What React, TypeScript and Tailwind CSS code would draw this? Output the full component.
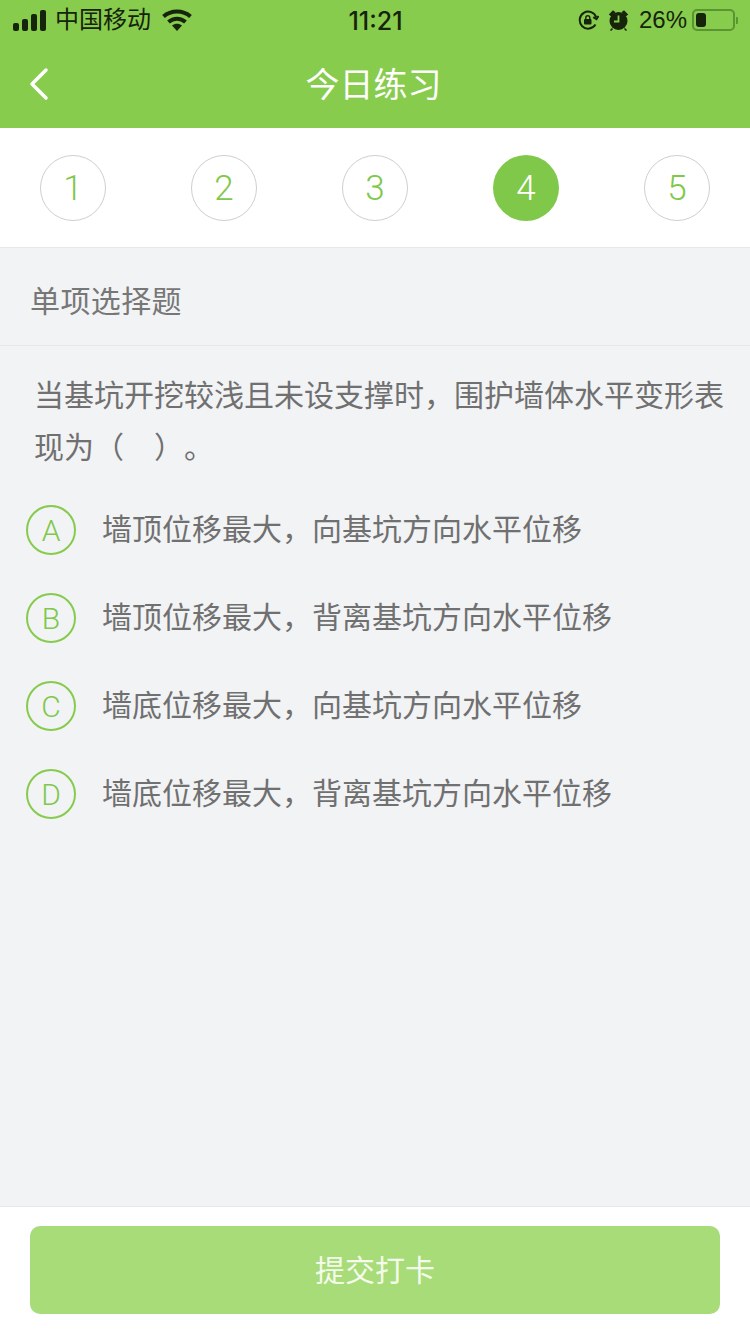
const cjk = "font-['Liberation_Sans','Noto_Sans_CJK_SC',sans-serif]";
const digits = "font-['Roboto','Noto_Sans_CJK_SC',sans-serif] font-light";

const steps = [1, 2, 3, 4, 5];

const options = [
  { key: "A", text: "墙顶位移最大，向基坑方向水平位移" },
  { key: "B", text: "墙顶位移最大，背离基坑方向水平位移" },
  { key: "C", text: "墙底位移最大，向基坑方向水平位移" },
  { key: "D", text: "墙底位移最大，背离基坑方向水平位移" },
];

function StatusBar() {
  return (
    <div className="h-10 flex items-center pl-[13px] pr-[12px] text-[#16240c]">
      <div className="flex-1 flex items-center">
        <div className="flex items-end gap-[3px] h-[22px]">
          <span className="w-[6px] h-[8px] rounded-[2px] bg-[#16240c]" />
          <span className="w-[6px] h-[12px] rounded-[2px] bg-[#16240c]" />
          <span className="w-[6px] h-[17px] rounded-[2px] bg-[#16240c]" />
          <span className="w-[6px] h-[21px] rounded-[2px] bg-[#16240c]" />
        </div>
        <span className="ml-[9px] text-[24px] leading-none">中国移动</span>
        <svg className="ml-[11px]" width="30" height="22" viewBox="0 0 30 22" fill="none" stroke="#16240c" strokeWidth="4">
          <path d="M1.500 7.500C9 .8 21 .8 28.500 7.500" />
          <path d="M6.500 13C11.500 8.500 18.500 8.500 23.500 13" />
          <path d="M15 22l-5-5.500c3-2.200 7-2.200 10 0z" fill="#16240c" stroke="none" />
        </svg>
      </div>
      <span className="text-[25px] font-['Inter'] font-medium leading-none mt-[2px]">11:21</span>
      <div className="flex-1 flex items-center justify-end">
        <svg width="22" height="20" viewBox="0 0 22 20" fill="none" stroke="#16240c" strokeWidth="2">
          <path d="M18.500 14.500a8.500 8.500 0 1 1 .8-7" />
          <path d="M21.500 6l-2 3.200-3.200-2" />
          <rect x="7" y="9" width="7.500" height="5.500" rx="1" fill="#16240c" stroke="none" />
          <path d="M8.800 9.500V7.800a2 2 0 0 1 4 0V9.500" strokeWidth="1.400" />
        </svg>
        <svg className="ml-[9px]" width="21" height="22" viewBox="0 0 21 22" fill="#16240c">
          <circle cx="10.500" cy="12" r="9" />
          <path d="M.8 5.500L5 1.200l2.500 2-4.300 4.300zM20.200 5.500L16 1.200l-2.500 2 4.300 4.300z" />
          <path d="M4.500 19.500l-2 2M16.500 19.500l2 2" stroke="#16240c" strokeWidth="1.500" />
          <path d="M10.500 6.500v6H6" stroke="#88cc4e" strokeWidth="1.800" fill="none" />
        </svg>
        <span className="ml-[10px] text-[24px] leading-none">26%</span>
        <div className="ml-[5px] flex items-center">
          <div className="w-[43px] h-[22px] rounded-[5px] border-2 border-[#5a9433] p-[2px]">
            <div className="w-[10px] h-full rounded-[3px] bg-[#16240c]" />
          </div>
          <span className="ml-[1px] w-[2px] h-[7px] bg-[#5a9433] rounded-r-[1px]" />
        </div>
      </div>
    </div>
  );
}

export default function App() {
  return (
    <div className={`w-[750px] h-[1334px] flex flex-col bg-[#f2f3f5] ${cjk}`}>
      <header className="h-[128px] bg-[#88cc4e]">
        <StatusBar />
        <div className="relative h-[88px] flex items-center justify-center">
          <svg className="absolute left-[28px] top-[27px]" width="22" height="34" viewBox="0 0 22 34" fill="none" stroke="#ffffff" strokeWidth="3.500" strokeLinecap="round" strokeLinejoin="round">
            <path d="M18 3L4 17l14 14" />
          </svg>
          <h1 className="text-white text-[34px] leading-none mb-[-2px] mr-[3px]">今日练习</h1>
        </div>
      </header>

      <div className="h-[120px] bg-white border-b border-[#e8e8e8] flex items-center justify-between px-[40px]">
        {steps.map((n) => (
          <div
            key={n}
            className={
              n === 4
                ? `w-[66px] h-[66px] pt-[3px] rounded-full bg-[#7fc84a] text-white flex items-center justify-center text-[35px] ${digits}`
                : `w-[66px] h-[66px] pt-[3px] rounded-full border border-[#cfcfcf] text-[#7fc84a] flex items-center justify-center text-[35px] ${digits}`
            }
          >
            {n}
          </div>
        ))}
      </div>

      <div className="h-[98px] border-b border-[#e6e7e9] flex items-center pl-[30px] pt-[9px] text-[30px] tracking-[0.4px] text-[#777777]">
        单项选择题
      </div>

      <p className="pl-[34px] pr-[24px] pt-[24px] text-[30px] leading-[52px] text-[#707070] [text-spacing-trim:space-all]">
        当基坑开挖较浅且未设支撑时，围护墙体水平变形表现为（　）。
      </p>

      <ul className="flex flex-col gap-[38px] pl-[26px] pt-[31px]">
        {options.map((o) => (
          <li key={o.key} className="flex items-center h-[50px]">
            <span className={`w-[50px] h-[50px] rounded-full border-2 border-[#86cb4e] text-[#7fc84a] text-[30px] flex items-center justify-center ${digits}`}>
              {o.key}
            </span>
            <span className="ml-[26px] text-[30px] text-[#707070] mt-[-2px]">{o.text}</span>
          </li>
        ))}
      </ul>

      <footer className="mt-auto h-[128px] bg-white border-t border-[#e8e8e8] px-[30px] pt-[19px]">
        <button className="w-[690px] h-[88px] rounded-[10px] bg-[#a8dc78] text-[#f4fbec] text-[30px]">提交打卡</button>
      </footer>
    </div>
  );
}
